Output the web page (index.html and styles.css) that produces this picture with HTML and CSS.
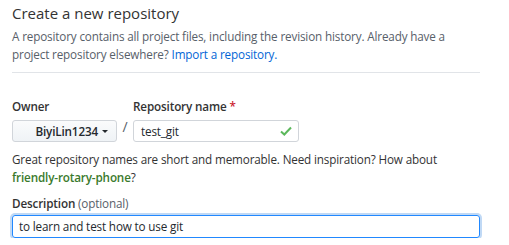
FILE: index.html
```html
<!DOCTYPE html>
<html>
<head>
<meta charset="utf-8">
<link rel="stylesheet" href="styles.css">
</head>
<body>
<div class="page">
  <div class="head">
    <h1 class="title">Create a new repository</h1>
    <p class="lead">A repository contains all project files, including the revision history. Already have a project repository elsewhere? <a class="link" href="#">Import a repository.</a></p>
  </div>
  <div class="owner-row">
    <div class="field">
      <label class="label">Owner</label>
      <button class="owner-btn">BiyiLin1234 <span class="caret"></span></button>
    </div>
    <span class="slash">/</span>
    <div class="field">
      <label class="label">Repository name <span class="req">*</span></label>
      <div class="name-input">
        <span class="val">test_git</span>
        <svg class="check" width="12" height="10" viewBox="0 0 12 10"><path d="M1 5.5 L4.3 8.5 L11 1.5" fill="none" stroke="#5cb85c" stroke-width="2"/></svg>
      </div>
    </div>
  </div>
  <p class="hint">Great repository names are short and memorable. Need inspiration? How about <strong class="sugg">friendly-rotary-phone</strong>?</p>
  <label class="label desc-label">Description <span class="opt">(optional)</span></label>
  <div class="desc-input">to learn and test how to use git</div>
</div>
</body>
</html>
```
FILE: styles.css
```css
* { box-sizing: border-box; }
html, body { margin: 0; padding: 0; background: #fff; }
body { font-family: "Open Sans", "Noto Sans", sans-serif; color: #24292e; font-size: 11.7px; letter-spacing: -0.15px; }
.page { width: 480px; padding-left: 12px; }
.head { border-bottom: 1px solid #e1e4e8; padding-bottom: 9px; }
.title { margin: 0; padding-top: 3px; font-size: 15px; font-weight: 400; line-height: 21px; color: #333; letter-spacing: 0; }
.lead { margin: 3px 0 0; color: #586069; line-height: 18px; }
.link { color: #0366d6; text-decoration: none; }
.owner-row { display: flex; align-items: flex-end; margin-top: 24px; }
.field { display: flex; flex-direction: column; }
.label { font-weight: 600; color: #333; line-height: 18px; margin-bottom: 5px; display: block; }
.req { color: #cb2431; }
.owner-btn { width: 105px; height: 22px; border: 1px solid #d1d5da; border-radius: 3px; background: linear-gradient(#fafbfc, #eff3f6); font: 600 11.7px "Open Sans", sans-serif; letter-spacing: -0.15px; color: #24292e; display: flex; align-items: center; justify-content: flex-end; padding: 0 8px 0 0; gap: 4px; }
.caret { width: 0; height: 0; border-left: 3px solid transparent; border-right: 3px solid transparent; border-top: 3px solid #24292e; }
.slash { width: 16px; text-align: center; font-size: 14px; color: #586069; line-height: 22px; margin-bottom: 4px; }
.name-input { width: 166px; height: 22px; border: 1px solid #d1d5da; border-radius: 3px; display: flex; align-items: center; justify-content: space-between; padding: 0 6px 0 7px; }
.val { color: #24292e; }
.hint { margin: 8px 0 0; line-height: 18px; color: #333; }
.sugg { color: #3a7a2c; font-weight: 600; }
.desc-label { margin-top: 8px; margin-bottom: 3px; }
.opt { color: #586069; font-weight: 400; }
.desc-input { width: 468px; height: 23px; border: 1px solid #2188ff; border-radius: 3px; box-shadow: 0 0 0 2px rgba(3,102,214,0.25); padding: 0 6px; line-height: 21px; color: #24292e; }
```
